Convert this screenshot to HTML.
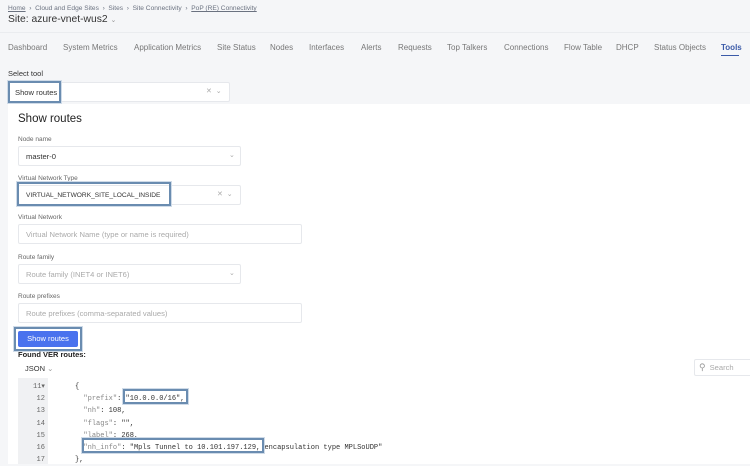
<!DOCTYPE html>
<html><head><style>
*{box-sizing:border-box;margin:0;padding:0}
body{width:750px;height:464px;overflow:hidden;background:#f5f6f8;font-family:"Liberation Sans",sans-serif;color:#333;position:relative}
.a{position:absolute}
.crumb{font-size:6.6px;color:#6b7280;top:5px;left:8px;white-space:nowrap}
.crumb u{color:#6b7280}
.title{top:14px;left:8px;font-size:10.3px;color:#333}
.tabs{top:43px;left:8px;font-size:8px;color:#777;white-space:nowrap}
.tabs span{position:absolute;top:0}
.lbl{font-size:6.5px;color:#666}
.inp{background:#fff;border:1px solid #e6e8ec;border-radius:2px;font-size:7.6px;padding-left:7px;display:flex;align-items:center;white-space:nowrap}
.ph{color:#aaa}
.chev{position:absolute;font-size:7px;color:#aaa}
.hl{position:absolute;border:2px solid #6a8cb0;box-shadow:0 0 0 1px #cfdbe8}
.code{font-family:"Liberation Mono",monospace;font-size:7.03px;white-space:pre;color:#333}
.key{color:#888}
</style></head><body>
<div class="a crumb"><u>Home</u> &nbsp;›&nbsp; Cloud and Edge Sites &nbsp;›&nbsp; Sites &nbsp;›&nbsp; Site Connectivity &nbsp;›&nbsp; <u>PoP (RE) Connectivity</u></div>
<div class="a title">Site: azure-vnet-wus2 <span style="font-size:7px;color:#999">⌄</span></div>
<div class="a" style="top:32px;left:0;width:750px;height:1px;background:#eaecef"></div>
<div class="a tabs">
<span style="left:0">Dashboard</span><span style="left:55px">System Metrics</span><span style="left:126px">Application Metrics</span><span style="left:209px">Site Status</span><span style="left:262px">Nodes</span><span style="left:301px">Interfaces</span><span style="left:353px">Alerts</span><span style="left:390px">Requests</span><span style="left:439px">Top Talkers</span><span style="left:496px">Connections</span><span style="left:556px">Flow Table</span><span style="left:608px">DHCP</span><span style="left:646px">Status Objects</span><span style="left:713px;color:#3b5aa8;font-weight:bold">Tools</span>
</div>
<div class="a" style="top:55px;left:721px;width:18px;height:1px;background:#3b5aa8"></div>
<div class="a lbl" style="top:69px;left:8px;font-size:7.5px;color:#333">Select tool</div>
<div class="a inp" style="top:82px;left:8px;width:222px;height:20px;color:#333;padding-left:6px">Show routes</div>
<div class="chev" style="top:87px;left:206px">✕ &nbsp;⌄</div>
<div class="hl" style="top:81px;left:8px;width:53px;height:22px"></div>

<div class="a" style="top:104px;left:8px;width:742px;height:360px;background:#fff"></div>
<div class="a" style="top:113px;left:18px;font-size:11.5px;color:#222">Show routes</div>
<div class="a lbl" style="top:136px;left:18px">Node name</div>
<div class="a inp" style="top:146px;left:18px;width:223px;height:20px;color:#333">master-0</div>
<div class="chev" style="top:151px;left:229px">⌄</div>
<div class="a lbl" style="top:175px;left:18px">Virtual Network Type</div>
<div class="a inp" style="top:185px;left:18px;width:223px;height:20px;color:#333;font-size:6.6px">VIRTUAL_NETWORK_SITE_LOCAL_INSIDE</div>
<div class="chev" style="top:190px;left:217px">✕ &nbsp;⌄</div>
<div class="hl" style="top:182px;left:17px;width:154px;height:24px"></div>
<div class="a lbl" style="top:214px;left:18px">Virtual Network</div>
<div class="a inp ph" style="top:224px;left:18px;width:284px;height:20px">Virtual Network Name (type or name is required)</div>
<div class="a lbl" style="top:254px;left:18px">Route family</div>
<div class="a inp ph" style="top:264px;left:18px;width:223px;height:20px">Route family (INET4 or INET6)</div>
<div class="chev" style="top:269px;left:229px">⌄</div>
<div class="a lbl" style="top:293px;left:18px">Route prefixes</div>
<div class="a inp ph" style="top:303px;left:18px;width:284px;height:20px">Route prefixes (comma-separated values)</div>
<div class="a" style="top:331px;left:18px;width:60px;height:16px;background:#4a72ee;border-radius:2px;color:#fff;font-size:7.5px;text-align:center;line-height:16px">Show routes</div>
<div class="hl" style="top:327px;left:14px;width:68px;height:24px"></div>
<div class="a" style="top:350px;left:18px;font-size:7.5px;font-weight:bold;color:#222">Found VER routes:</div>
<div class="a" style="top:364px;left:25px;font-size:7.5px;color:#333">JSON <span style="color:#999">⌄</span></div>
<div class="a inp ph" style="top:359px;left:694px;width:60px;height:17px;padding-left:4px"><span style="font-size:9px;color:#999;margin-right:4px">⚲</span>Search</div>
<div class="a" style="top:378px;left:18px;width:30px;height:86px;background:#f0f1f3"></div>
<div class="a code" style="top:381px;left:33px;color:#666;line-height:12.2px;text-align:right">11▾
12
13
14
15
16
17</div>
<div class="a code" style="top:381px;left:75px;line-height:12.2px">{
  <span class="key">"prefix"</span>: "10.0.0.0/16",
  <span class="key">"nh"</span>: 108,
  <span class="key">"flags"</span>: "",
  <span class="key">"label"</span>: 268,
  <span class="key">"nh_info"</span>: "Mpls Tunnel to 10.101.197.129, encapsulation type MPLSoUDP"
},</div>
<div class="hl" style="top:389px;left:123px;width:65px;height:15px"></div>
<div class="hl" style="top:438px;left:82px;width:182px;height:15px"></div>
</body></html>
